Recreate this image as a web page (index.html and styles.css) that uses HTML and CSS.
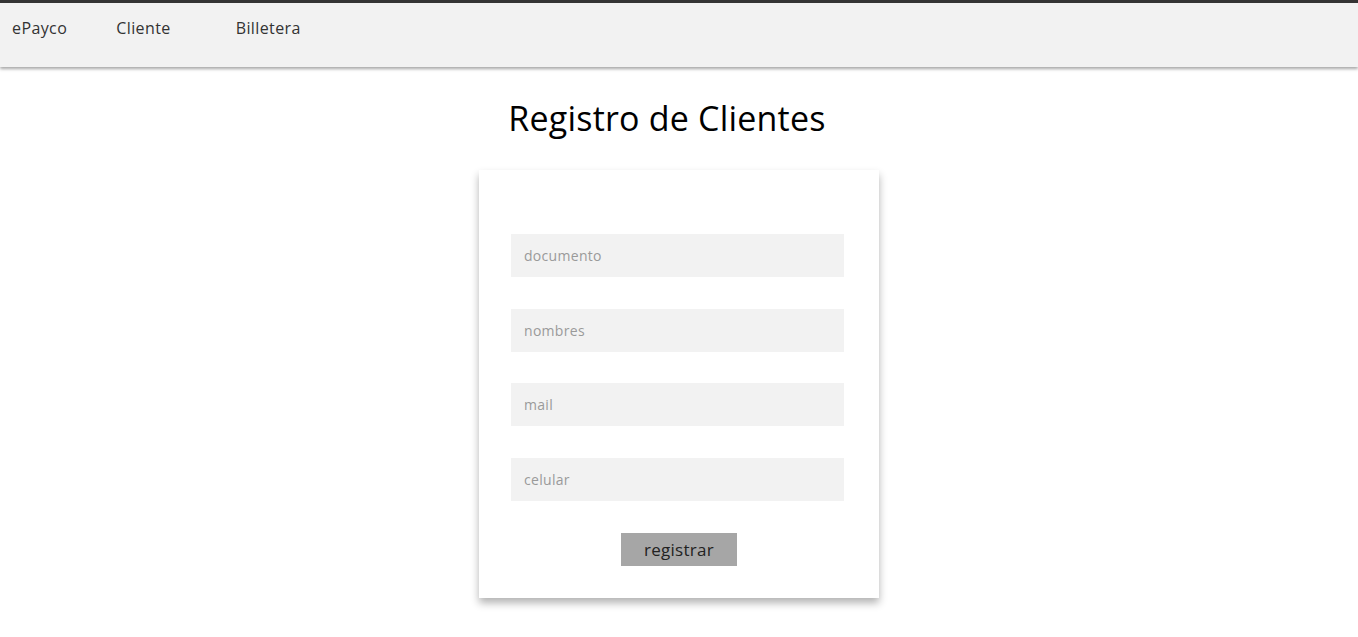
FILE: index.html
```html
<!DOCTYPE html>
<html lang="es">
<head>
<meta charset="utf-8">
<title>Registro de Clientes</title>
<link rel="stylesheet" href="styles.css">
</head>
<body>
<nav class="nav">
  <a class="nav-link brand" href="#">ePayco</a>
  <a class="nav-link cliente" href="#">Cliente</a>
  <a class="nav-link billetera" href="#">Billetera</a>
</nav>
<main class="main">
  <h1 class="title">Registro de Clientes</h1>
  <form class="card">
    <input class="field" type="text" placeholder="documento">
    <input class="field" type="text" placeholder="nombres">
    <input class="field" type="text" placeholder="mail">
    <input class="field" type="text" placeholder="celular">
    <div class="actions"><button class="btn" type="button">registrar</button></div>
  </form>
</main>
</body>
</html>
```
FILE: styles.css
```css
* { box-sizing: border-box; }
html, body { min-height: 100%; }
body {
  margin: 0;
  font-family: "Open Sans", "DejaVu Sans", sans-serif;
  background: #fff;
  color: #000;
}
.nav {
  height: 67px;
  border-top: 3px solid #343434;
  background: #f2f2f2;
  box-shadow: 0 2px 3px rgba(0,0,0,0.35);
  display: flex;
  align-items: flex-start;
  padding: 15px 0 0 12px;
}
.nav-link {
  font-size: 16px;
  line-height: 20px;
  color: #333;
  text-decoration: none;
  letter-spacing: 0.4px;
}
.cliente { margin-left: 49px; }
.billetera { margin-left: 65px; }
.main {
  display: flex;
  flex-direction: column;
  align-items: center;
  padding-bottom: 40px;
}
.title {
  margin: 29px 0 0 0;
  font-size: 34px;
  line-height: 44px;
  font-weight: 400;
  letter-spacing: 0.2px;
  position: relative;
  left: -12px;
}
.card {
  margin-top: 30px;
  width: 400px;
  padding: 64px 35px 32px 32px;
  background: #fff;
  box-shadow: 0 5px 8px rgba(0,0,0,0.3);
  display: flex;
  flex-direction: column;
  gap: 31.7px;
}
.field {
  height: 43px;
  width: 333px;
  border: none;
  background: #f2f2f2;
  padding: 0 13px;
  font-family: inherit;
  font-size: 14px;
  color: #333;
  outline: none;
}
.field::placeholder { color: #9a9a9a; letter-spacing: 0.3px; }
.actions { display: flex; justify-content: center; padding-left: 3px; }
.btn {
  width: 116px;
  height: 33px;
  border: none;
  background: #a6a6a6;
  font-family: inherit;
  font-size: 17px;
  color: #222;
  letter-spacing: 0.3px;
}
```
